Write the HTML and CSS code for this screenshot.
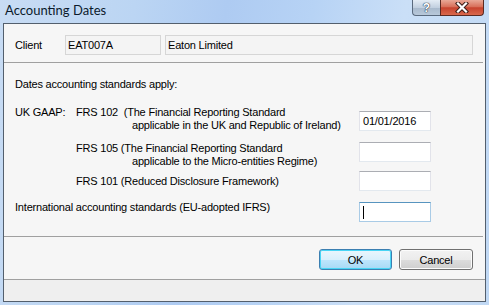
FILE: index.html
```html
<!DOCTYPE html>
<html lang="en">
<head>
    <meta charset="UTF-8">
    <title>Accounting Dates</title>
    <link rel="stylesheet" href="styles.css">
</head>
<body>

<div class="window">
    <div class="titlebar">
        <span class="title">Accounting Dates</span>
        <div class="caption-buttons">
            <span class="cap-help">?</span>
            <span class="cap-close">
                <svg width="14" height="11" viewBox="0 0 14 11">
                    <path d="M3 1.5 L11 9.5 M11 1.5 L3 9.5" stroke="#3b1d18" stroke-width="4.2" stroke-linecap="square"/>
                    <path d="M3 1.5 L11 9.5 M11 1.5 L3 9.5" stroke="#ffffff" stroke-width="2.2" stroke-linecap="square"/>
                </svg>
            </span>
        </div>
    </div>

    <div class="client">
        <div class="client-row">
            <span class="client-label">Client</span>
            <span class="readonly code">EAT007A</span>
            <span class="readonly name">Eaton Limited</span>
        </div>

        <hr class="sep">

        <p class="intro">Dates accounting standards apply:</p>

        <div class="row row-102">
            <span class="row-label">UK GAAP:</span>
            <div class="std">
                <div>FRS 102&nbsp; (The Financial Reporting Standard</div>
                <div class="cont">applicable in the UK and Republic of Ireland)</div>
            </div>
            <div class="field">01/01/2016</div>
        </div>

        <div class="row row-105">
            <span class="row-label"></span>
            <div class="std">
                <div>FRS 105 (The Financial Reporting Standard</div>
                <div class="cont">applicable to the Micro-entities Regime)</div>
            </div>
            <div class="field"></div>
        </div>

        <div class="row row-101">
            <span class="row-label"></span>
            <div class="std">
                <div>FRS 101 (Reduced Disclosure Framework)</div>
            </div>
            <div class="field"></div>
        </div>

        <div class="row row-ifrs">
            <div class="std-wide">International accounting standards (EU-adopted IFRS)</div>
            <div class="field focused"><span class="caret"></span></div>
        </div>

        <hr class="sep sep-bottom">

        <div class="buttons">
            <button class="btn btn-default">OK</button>
            <button class="btn">Cancel</button>
        </div>

        <div class="status-strip"></div>
    </div>
</div>

</body>
</html>
```

FILE: styles.css
```css
/* Global */
body {
    margin: 0;
    width: 489px;
    height: 305px;
    overflow: hidden;
    font-family: "Liberation Sans", Arial, sans-serif;
    font-size: 11px;
    letter-spacing: -0.2px;
    color: #000;
    background-color: #bcd5f0;
}

/* Window frame */
.window {
    display: flex;
    flex-direction: column;
    height: 305px;
    padding: 0 3px 3px;
    box-sizing: border-box;
    background: linear-gradient(100deg, #c8dcf4 0%, #bbd5f3 25%, #aecbf2 42%, #b7d3f5 58%, #cadff7 75%, #c0d8f4 100%);
}

.titlebar {
    height: 23px;
    display: flex;
    align-items: flex-start;
}

.title {
    margin: 2px 0 0 2px;
    font-family: "Lato", "Liberation Sans", sans-serif;
    font-size: 13px;
    letter-spacing: 0;
    line-height: 16px;
    color: #0b1a2c;
}

.caption-buttons {
    margin: 0 2px 0 auto;
    display: flex;
}

.cap-help, .cap-close {
    height: 16px;
    box-sizing: border-box;
    display: flex;
    align-items: center;
    justify-content: center;
}

.cap-help {
    width: 28px;
    border: 1px solid #5a6a7e;
    border-top: none;
    border-right: none;
    border-radius: 0 0 0 4px;
    background: linear-gradient(#e4ecf5, #c2d0e0 50%, #a8b9cc 52%, #b8c8da);
    color: #fff;
    font-weight: bold;
    font-size: 12px;
    letter-spacing: 0;
    text-shadow: 0 0 1px #2f3e50, 0 0 1px #2f3e50, 0 0 1px #2f3e50;
}

.cap-close {
    width: 44px;
    border: 1px solid #5b2a22;
    border-top: none;
    border-radius: 0 0 4px 0;
    background: linear-gradient(#e9a897, #d8705a 45%, #c7432e 52%, #d9684c);
}

/* Client area */
.client {
    flex: 1;
    display: flex;
    flex-direction: column;
    border: 1px solid #535f6d;
    background-color: #f6f6f6;
}

.client-row {
    display: flex;
    padding: 11px 0 0 11px;
    line-height: 20px;
}

.client-label {
    width: 50px;
}

.readonly {
    height: 20px;
    box-sizing: border-box;
    line-height: 18px;
    padding: 0 2px;
    border: 1px solid #d6d6d6;
    background-color: #f4f4f4;
}

.code {
    width: 96px;
    margin-right: 4px;
}

.name {
    width: 308px;
}

.sep {
    height: 1px;
    border: 0;
    margin: 7px 2px 0 0;
    background-color: #a0a0a0;
}

.intro {
    margin: 15px 0 0 11px;
    line-height: 13px;
}

/* Standards rows */
.row {
    display: flex;
    align-items: flex-start;
    padding-left: 11px;
    line-height: 13px;
}

.row-label {
    width: 61px;
    flex-shrink: 0;
}

.std {
    width: 283px;
    flex-shrink: 0;
}

.std-wide {
    width: 344px;
    flex-shrink: 0;
}

.cont {
    padding-left: 56px;
}

.field {
    position: relative;
    width: 72px;
    height: 20px;
    box-sizing: border-box;
    padding: 0 3px;
    line-height: 18px;
    background-color: #fff;
    border: 1px solid #e2e3ea;
    border-top-color: #abadb3;
    border-bottom-color: #e3e9ef;
}

.field.focused {
    border-color: #a9cbe6;
    border-top-color: #5794bf;
}

.caret {
    position: absolute;
    left: 3px;
    top: 3px;
    width: 1px;
    height: 13px;
    background-color: #000;
}

.row-102 {
    margin-top: 15px;
}

.row-102 .field {
    margin-top: 5px;
}

.row-105 {
    margin-top: 10px;
}

.row-101 {
    margin-top: 3px;
}

.row-101 .std {
    padding-top: 4px;
}

.row-ifrs {
    margin-top: 10px;
}

.row-ifrs .field {
    margin-top: 1px;
}

.sep-bottom {
    margin-top: 14px;
}

/* Buttons */
.buttons {
    display: flex;
    justify-content: flex-end;
    gap: 7px;
    margin-top: 12px;
    padding-right: 12px;
}

.btn {
    width: 74px;
    height: 21px;
    padding: 0;
    font-family: "Liberation Sans", Arial, sans-serif;
    font-size: 11px;
    letter-spacing: -0.2px;
    color: #000;
    border: 1px solid #707070;
    border-radius: 3px;
    background: linear-gradient(#f2f2f2, #ebebeb 50%, #dddddd 51%, #cfcfcf);
    box-shadow: inset 0 0 0 1px #fcfcfc;
}

.btn-default {
    width: 73px;
    border-color: #3c7fb1;
    background: linear-gradient(#eaf6fd, #d9f0fc 50%, #bee6fd 51%, #a7d9f5);
    box-shadow: inset 0 0 0 1px #48d5f5;
}

.status-strip {
    margin-top: auto;
    height: 22px;
    box-sizing: border-box;
    border-top: 1px solid #a0a0a0;
    background-color: #efefef;
}
```
